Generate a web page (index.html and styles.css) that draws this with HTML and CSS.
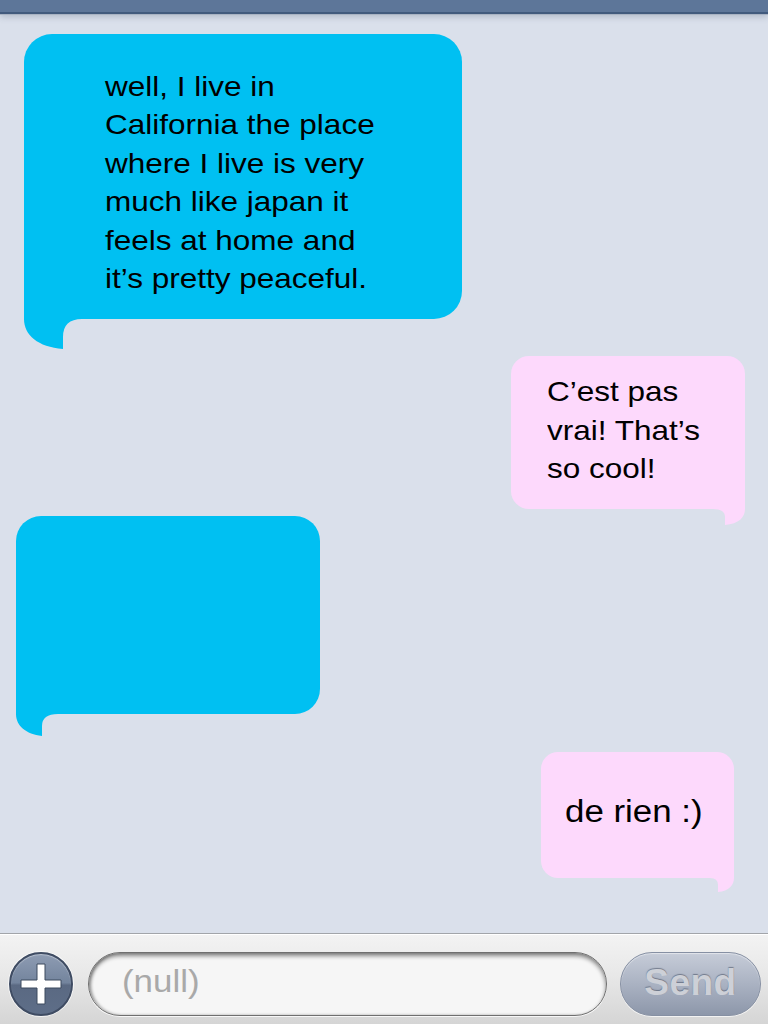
FILE: index.html
```html
<!DOCTYPE html>
<html lang="en">
<head>
<meta charset="utf-8">
<title>Messages</title>
<link rel="stylesheet" href="styles.css">
</head>
<body>
<div class="screen">
  <header class="topbar"></header>
  <main class="thread">
    <div class="bubble in b1">
      <p>well, I live in California the place where I live is very much like japan it feels at home and it’s pretty peaceful.</p>
      <svg class="tail tail-in1" viewBox="0 0 58 30" width="58" height="30"><path d="M0,0 L58,0 Q39,0 39,18 L39,30 C14,28 0,16 0,0 Z"/></svg>
    </div>
    <div class="bubble out b2">
      <p>C’est pas vrai! That’s so cool!</p>
      <svg class="tail tail-out" viewBox="0 0 32 16" width="32" height="16"><path d="M32,0 L0,0 Q12,0 12,8 L12,16 C26,15 32,8 32,0 Z"/></svg>
    </div>
    <div class="bubble in b3">
      <svg class="tail tail-in3" viewBox="0 0 42 22" width="42" height="22"><path d="M0,0 L42,0 Q26,0 26,12 L26,22 C10,20 0,12 0,0 Z"/></svg>
    </div>
    <div class="bubble out b4">
      <p>de rien :)</p>
      <svg class="tail tail-out" viewBox="0 0 24 14" width="24" height="14"><path d="M24,0 L0,0 Q8,0 8,7 L8,14 C19,13 24,7 24,0 Z"/></svg>
    </div>
  </main>
  <footer class="composer">
    <button class="plus" type="button" aria-label="Add">
      <svg viewBox="0 0 46 46" width="46" height="46"><path d="M19,3 H27 V19 H43 V27 H27 V43 H19 V27 H3 V19 H19 Z" fill="#fff" stroke="#3d4a5e" stroke-width="1"/></svg>
    </button>
    <div class="field"><span class="placeholder">(null)</span></div>
    <button class="send" type="button">Send</button>
  </footer>
</div>
</body>
</html>
```

FILE: styles.css
```css
* { box-sizing: border-box; }

html, body {
  margin: 0;
  padding: 0;
}

body {
  font-family: "Liberation Sans", Arial, sans-serif;
  background: #dae0eb;
}

.screen {
  width: 768px;
  height: 1024px;
  display: flex;
  flex-direction: column;
  overflow: hidden;
  background: #dae0eb;
}

.topbar {
  height: 14px;
  flex: none;
  background: #5d7699;
  border-bottom: 2px solid #415a7d;
  box-shadow: 0 1px 0 #a9b3c3, 0 3px 6px rgba(60, 80, 110, 0.25);
  position: relative;
  z-index: 1;
}

.thread {
  flex: 1;
  display: flex;
  flex-direction: column;
  align-items: flex-start;
}

.bubble {
  position: relative;
  color: #000;
}

/* glyphs are drawn slightly wide, as on the original stretched screen */
.bubble p {
  margin: 0;
  font-size: 28px;
  line-height: 38.4px;
  transform: scaleX(1.125);
  transform-origin: 0 0;
}

.bubble.in { background: #00c0f2; fill: #00c0f2; }
.bubble.out { background: #fdd9fc; fill: #fdd9fc; align-self: flex-end; }

.tail {
  position: absolute;
  top: 100%;
  display: block;
}
.tail-in1, .tail-in3 { left: 0; }
.tail-out { right: 0; }

.b1 {
  margin-top: 20px;
  margin-left: 24px;
  width: 438px;
  padding: 34px 0 21px 81px;
  border-radius: 28px 28px 28px 0;
}
.b1 p { width: 255px; }

.b2 {
  margin-top: 37px;
  margin-right: 23px;
  width: 234px;
  padding: 17px 0 20px 36px;
  border-radius: 18px 18px 0 18px;
}
.b2 p { width: 153px; }

.b3 {
  margin-top: 7px;
  margin-left: 16px;
  width: 304px;
  height: 198px;
  border-radius: 25px 25px 25px 0;
}

.b4 {
  margin-top: 38px;
  margin-right: 34px;
  width: 193px;
  padding: 41px 0 47px 24px;
  border-radius: 17px 17px 0 17px;
}
.b4 p {
  font-size: 31px;
  line-height: 38px;
  width: 140px;
}

.composer {
  flex: none;
  height: 91px;
  display: flex;
  align-items: center;
  padding: 18px 7px 8px 9px;
  border-top: 1px solid #a2a5aa;
  background: linear-gradient(#f3f3f3 0%, #e8e8e8 45%, #d5d5d5 100%);
  box-shadow: inset 0 1px 0 #ffffff;
}

.plus {
  width: 64px;
  height: 64px;
  flex: none;
  padding: 0;
  border-radius: 50%;
  border: 2px solid #3f4c63;
  background: linear-gradient(#8e9cb3 0%, #73849d 48%, #5a6982 52%, #5e6e88 100%);
  box-shadow: 0 0 0 1px rgba(255, 255, 255, 0.7), inset 0 1px 1px rgba(255, 255, 255, 0.4);
  display: flex;
  align-items: center;
  justify-content: center;
}
.plus svg { display: block; }

.field {
  margin-left: 15px;
  width: 519px;
  height: 64px;
  flex: none;
  border-radius: 32px;
  border: 1px solid #6f6f6f;
  background: #f6f6f6;
  box-shadow: inset 0 3px 4px rgba(0, 0, 0, 0.45), inset 2px 0 3px rgba(0, 0, 0, 0.25), 0 1px 0 rgba(255, 255, 255, 0.8);
  display: flex;
  align-items: center;
  padding-left: 33px;
}

.placeholder {
  font-size: 31px;
  color: #a9a9a9;
  margin-top: -4px;
  transform: scaleX(1.125);
  transform-origin: 0 50%;
}

.send {
  margin-left: 13px;
  width: 141px;
  height: 64px;
  flex: none;
  border-radius: 32px;
  border: 1px solid #8690a3;
  background: linear-gradient(#c6ccd8 0%, #aab2c2 50%, #8d97aa 100%);
  box-shadow: 0 1px 0 rgba(255, 255, 255, 0.7), inset 0 1px 1px rgba(255, 255, 255, 0.5);
  font-family: "Liberation Sans", Arial, sans-serif;
  font-weight: bold;
  font-size: 37px;
  color: #cdd0d7;
  text-shadow: 0 -1px 1px rgba(60, 70, 90, 0.55);
  padding: 0 0 2px 0;
  letter-spacing: 0.5px;
}
```
